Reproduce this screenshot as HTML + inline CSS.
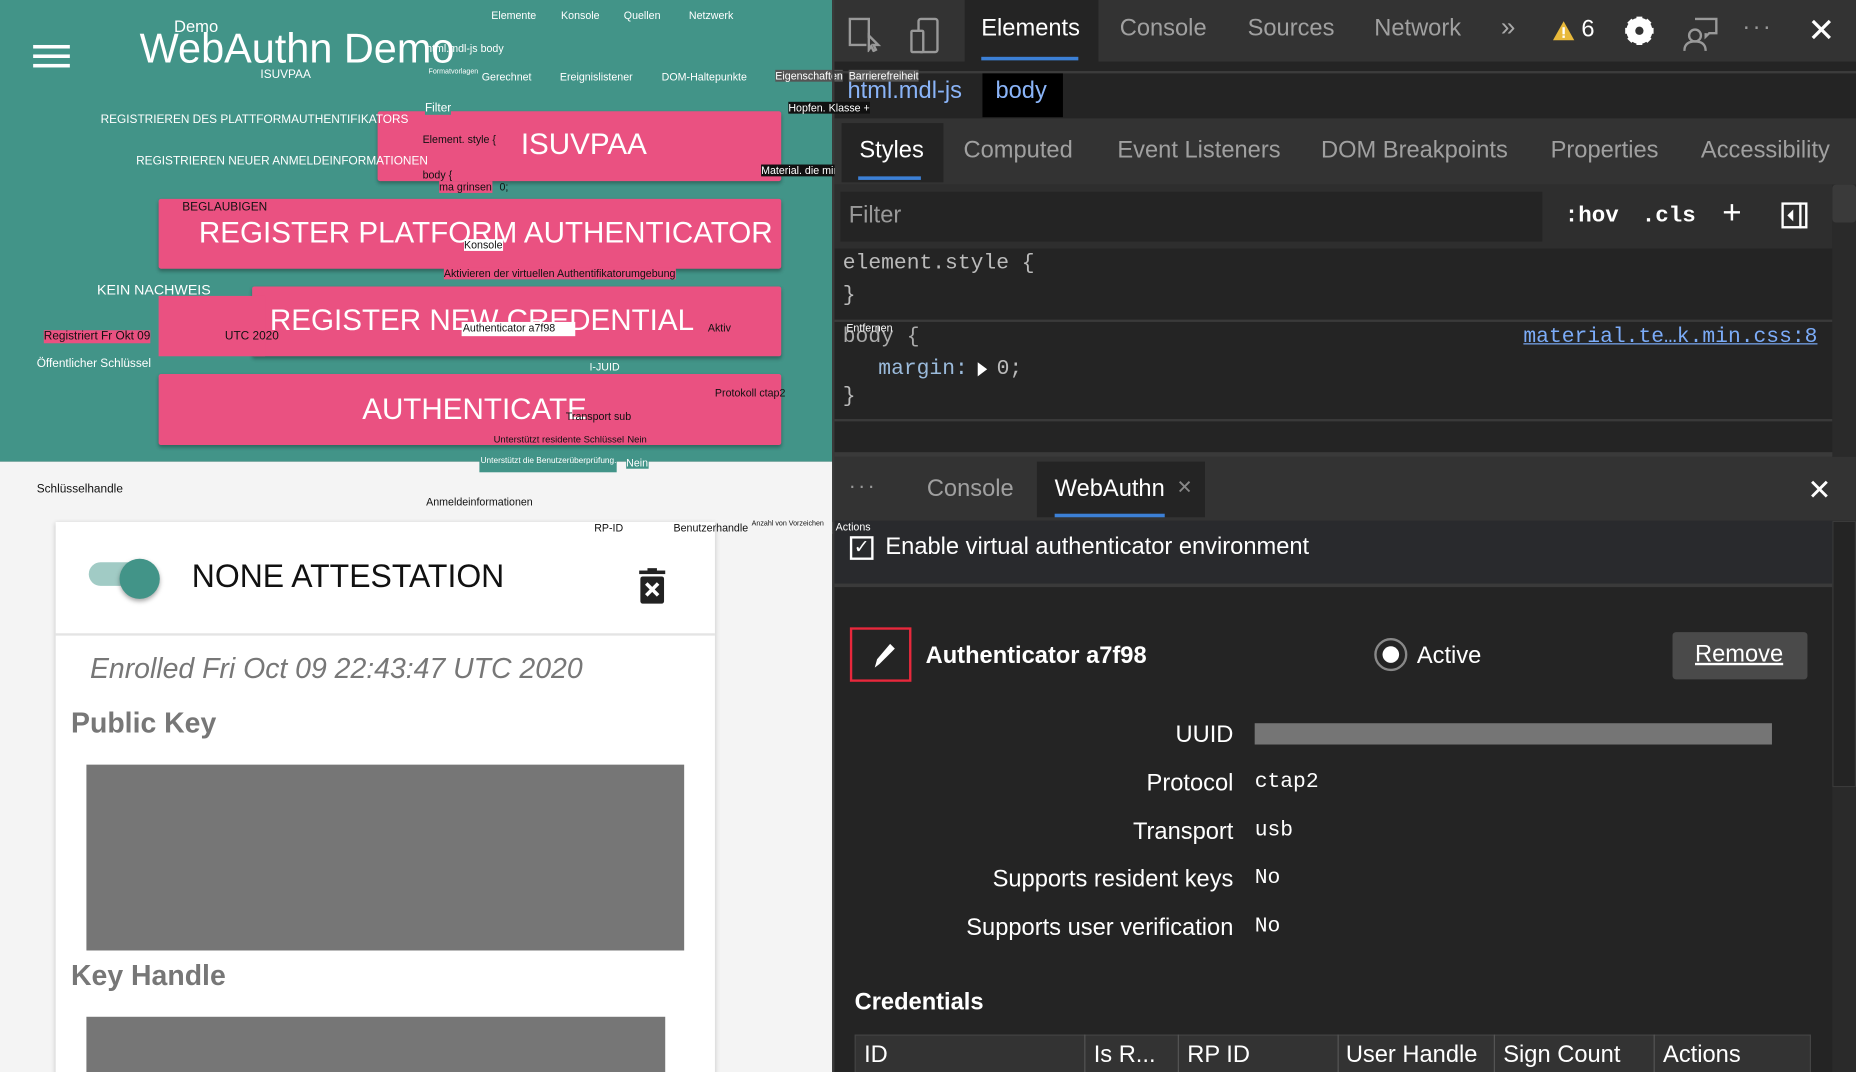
<!DOCTYPE html>
<html><head><meta charset="utf-8">
<style>
html,body{margin:0;padding:0;width:1856px;height:1072px;overflow:hidden;background:#242424}
#w{position:absolute;left:0;top:0;width:1568px;height:906px;transform:scale(1.18367);transform-origin:0 0;font-family:"Liberation Sans",Arial,sans-serif;overflow:hidden}
.a{position:absolute;white-space:nowrap}
.mono{font-family:"Liberation Mono","DejaVu Sans Mono",monospace}
.pk{background:#ea5181;box-shadow:0 2px 3px rgba(0,0,0,.3);border-radius:2px}
.s{font-size:9px;color:#111;line-height:11px}
.dt{color:#a0a0a0;font-size:20px}
</style></head><body><div id="w">
<!-- left -->
<div class="a" style="left:0;top:0;width:703px;height:390px;background:#429488"></div>
<div class="a" style="left:0;top:390px;width:703px;height:516px;background:#f4f4f4"></div>
<div class="a" style="left:28px;top:38px;width:31px;height:3px;background:#fff;box-shadow:0 8px 0 #fff,0 16px 0 #fff"></div>
<div class="a" style="left:147px;top:14px;font-size:14px;color:#fff">Demo</div>
<div class="a" style="left:118px;top:22px;font-size:35px;color:#fff">WebAuthn Demo</div>
<div class="a" style="left:220px;top:58px;font-size:10px;color:#fff">ISUVPAA</div>
<div class="a" style="left:415px;top:8px;font-size:9px;color:#fff">Elemente</div>
<div class="a" style="left:474px;top:8px;font-size:9px;color:#fff">Konsole</div>
<div class="a" style="left:527px;top:8px;font-size:9px;color:#fff">Quellen</div>
<div class="a" style="left:582px;top:8px;font-size:9px;color:#fff">Netzwerk</div>
<div class="a" style="left:360px;top:36px;font-size:9px;color:#fff">html.mdl-js body</div>
<div class="a" style="left:362px;top:58px;font-size:6px;color:#fff">Formatvorlagen</div>
<div class="a" style="left:407px;top:60px;font-size:9px;color:#fff">Gerechnet</div>
<div class="a" style="left:473px;top:60px;font-size:9px;color:#fff">Ereignislistener</div>
<div class="a" style="left:559px;top:60px;font-size:9px;color:#fff">DOM-Haltepunkte</div>
<div class="a" style="left:655px;top:59px;font-size:9px;color:#fff;background:#555">Eigenschaften</div>
<div class="a pk" style="left:319px;top:94px;width:341px;height:59px"></div>
<div class="a" style="left:85px;top:96px;font-size:10px;color:#fff">REGISTRIEREN DES PLATTFORMAUTHENTIFIKATORS</div>
<div class="a" style="left:115px;top:131px;font-size:10px;color:#fff">REGISTRIEREN NEUER ANMELDEINFORMATIONEN</div>
<div class="a" style="left:440px;top:108px;font-size:25px;color:#fff">ISUVPAA</div>
<div class="a" style="left:359px;top:86px;font-size:10px;color:#fff;background:#429488">Filter</div>
<div class="a" style="left:357px;top:108px" ><span class="s">Element. style {</span></div>
<div class="a" style="left:357px;top:138px"><span class="s">body {</span></div>
<div class="a" style="left:371px;top:153px;font-size:9px;background:#ea5181;color:#111">ma grinsen</div>
<div class="a" style="left:422px;top:153px;font-size:9px;color:#111">0;</div>
<div class="a pk" style="left:134px;top:168px;width:526px;height:59px"></div>
<div class="a" style="left:154px;top:170px;font-size:10px;color:#111">BEGLAUBIGEN</div>
<div class="a" style="left:168px;top:183px;font-size:25px;color:#fff">REGISTER PLATFORM AUTHENTICATOR</div>
<div class="a" style="left:392px;top:202px;font-size:9px;color:#111;background:#fff">Konsole</div>
<div class="a" style="left:375px;top:226px;font-size:9px;color:#111;background:#ea5181">Aktivieren der virtuellen Authentifikatorumgebung</div>
<div class="a" style="left:82px;top:238px;font-size:12px;color:#fff">KEIN NACHWEIS</div>
<div class="a pk" style="left:213px;top:242px;width:447px;height:59px"></div>
<div class="a" style="left:134px;top:250px;width:90px;height:51px;background:#ea5181"></div>
<div class="a" style="left:228px;top:257px;font-size:25px;color:#fff">REGISTER NEW CREDENTIAL</div>
<div class="a" style="left:390px;top:272px;width:96px;height:12px;background:#fff"></div>
<div class="a" style="left:391px;top:272px;font-size:9px;color:#111">Authenticator a7f98</div>
<div class="a" style="left:598px;top:272px;font-size:9px;color:#111">Aktiv</div>
<div class="a" style="left:37px;top:279px;font-size:10px;color:#111;background:#ea5181">Registriert Fr Okt 09</div>
<div class="a" style="left:190px;top:279px;font-size:10px;color:#111">UTC 2020</div>
<div class="a" style="left:31px;top:302px;font-size:10px;color:#fff">Öffentlicher Schlüssel</div>
<div class="a" style="left:498px;top:305px;font-size:9px;color:#fff">I-JUID</div>
<div class="a pk" style="left:134px;top:316px;width:526px;height:60px"></div>
<div class="a" style="left:306px;top:332px;font-size:25px;color:#fff">AUTHENTICATE</div>
<div class="a" style="left:604px;top:327px;font-size:9px;color:#111">Protokoll ctap2</div>
<div class="a" style="left:478px;top:347px;font-size:9px;color:#111">Transport sub</div>
<div class="a" style="left:417px;top:367px;font-size:8px;color:#111">Unterstützt residente Schlüssel</div>
<div class="a" style="left:530px;top:367px;font-size:8px;color:#111">Nein</div>
<div class="a" style="left:405px;top:384px;width:116px;height:15px;background:#429488"></div>
<div class="a" style="left:406px;top:386px;font-size:7px;color:#fff">Unterstützt die Benutzerüberprüfung.</div>
<div class="a" style="left:529px;top:386px;font-size:9px;color:#fff;background:#429488">Nein</div>
<div class="a" style="left:31px;top:408px;font-size:10px;color:#111">Schlüsselhandle</div>
<div class="a" style="left:360px;top:419px;font-size:9px;color:#111">Anmeldeinformationen</div>
<div class="a" style="left:47px;top:441px;width:557px;height:470px;background:#fff;box-shadow:0 1px 4px rgba(0,0,0,.2)"></div>
<div class="a" style="left:47px;top:535px;width:557px;height:2px;background:#e4e4e4"></div>
<div class="a" style="left:502px;top:441px;font-size:9px;color:#111">RP-ID</div>
<div class="a" style="left:569px;top:441px;font-size:9px;color:#111">Benutzerhandle</div>
<div class="a" style="left:635px;top:440px;font-size:6px;color:#111">Anzahl von Vorzeichen</div>
<div class="a" style="left:703px;top:441px;font-size:9px;color:#111;background:#fff">Actions</div>
<div class="a" style="left:75px;top:475px;width:52px;height:20px;border-radius:10px;background:#a1cbc5"></div>
<div class="a" style="left:101px;top:472px;width:34px;height:34px;border-radius:50%;background:#429488;box-shadow:0 2px 4px rgba(0,0,0,.35)"></div>
<div class="a" style="left:162px;top:472px;font-size:27px;color:#111">NONE ATTESTATION</div>
<svg class="a" style="left:538px;top:479px" width="26" height="32" viewBox="0 0 26 32"><rect x="2" y="3" width="22" height="3" fill="#222"/><rect x="9" y="1" width="8" height="3" fill="#222"/><rect x="3" y="8" width="20" height="23" rx="2" fill="#222"/><path d="M8 14l10 10M18 14L8 24" stroke="#fff" stroke-width="3"/></svg>
<div class="a" style="left:76px;top:552px;font-size:24px;font-style:italic;color:#777">Enrolled Fri Oct 09 22:43:47 UTC 2020</div>
<div class="a" style="left:60px;top:598px;font-size:24px;font-weight:bold;color:#777">Public Key</div>
<div class="a" style="left:73px;top:646px;width:505px;height:157px;background:#767676"></div>
<div class="a" style="left:60px;top:811px;font-size:24px;font-weight:bold;color:#777">Key Handle</div>
<div class="a" style="left:73px;top:859px;width:489px;height:50px;background:#767676"></div>
<!-- devtools -->
<div class="a" style="left:703px;top:0;width:2px;height:906px;background:#3a3a3a"></div>
<div class="a" style="left:705px;top:0;width:863px;height:52px;background:#333"></div>
<svg class="a" style="left:716px;top:14px" width="30" height="30" viewBox="0 0 30 30" fill="none" stroke="#999" stroke-width="2"><path d="M18 18V2H2v22h14"/><path d="M18 16l8 8-4 0 2 4-2 1-2-4-2 3z" fill="#333"/></svg>
<svg class="a" style="left:768px;top:14px" width="28" height="32" viewBox="0 0 28 32" fill="none" stroke="#999" stroke-width="2"><rect x="8" y="2" width="16" height="28" rx="2"/><rect x="2" y="12" width="10" height="18" rx="1" fill="#333"/></svg>
<div class="a" style="left:815px;top:0;width:113px;height:52px;background:#242424"></div>
<div class="a" style="left:829px;top:48px;width:82px;height:3px;background:#3c80d6"></div>
<div class="a" style="left:829px;top:13px;font-size:20px;color:#fff">Elements</div>
<div class="a dt" style="left:946px;top:13px">Console</div>
<div class="a dt" style="left:1054px;top:13px">Sources</div>
<div class="a dt" style="left:1161px;top:13px">Network</div>
<div class="a" style="left:1268px;top:10px;font-size:22px;color:#aaa">»</div>
<svg class="a" style="left:1311px;top:17px" width="20" height="18" viewBox="0 0 20 18"><path d="M10 1L19 17H1z" fill="#e8b93b"/><rect x="9" y="6" width="2" height="6" fill="#fff"/><rect x="9" y="13" width="2" height="2" fill="#fff"/></svg>
<div class="a" style="left:1336px;top:14px;font-size:20px;color:#fff">6</div>
<svg class="a" style="left:1372px;top:13px" width="26" height="26" viewBox="0 0 26 26"><circle cx="13" cy="13" r="8" fill="none" stroke="#fff" stroke-width="6"/><g stroke="#fff" stroke-width="5"><path d="M13 1v24M1 13h24M4.5 4.5l17 17M21.5 4.5l-17 17"/></g><circle cx="13" cy="13" r="3.5" fill="#333"/></svg>
<svg class="a" style="left:1422px;top:14px" width="30" height="30" viewBox="0 0 30 30" fill="none" stroke="#999" stroke-width="2"><path d="M10 2h18v12h-6l-3 3v-3"/><circle cx="10" cy="16" r="5"/><path d="M1 29c0-6 4-8 9-8s9 2 9 8"/></svg>
<div class="a" style="left:1472px;top:12px;font-size:20px;color:#999;letter-spacing:2px">···</div>
<div class="a" style="left:1527px;top:9px;font-size:28px;color:#fff">✕</div>
<div class="a" style="left:705px;top:60px;width:863px;height:2px;background:#3c3c3c"></div>
<div class="a" style="left:716px;top:66px;font-size:20px;color:#8ab4f8">html.mdl-js</div>
<div class="a" style="left:830px;top:62px;width:68px;height:37px;background:#000"></div>
<div class="a" style="left:841px;top:66px;font-size:20px;color:#8ab4f8">body</div>
<div class="a" style="left:717px;top:59px;font-size:9px;color:#fff;background:#555">Barrierefreiheit</div>
<div class="a" style="left:666px;top:86px;font-size:9px;color:#fff;background:#111">Hopfen. Klasse +</div>
<div class="a" style="left:643px;top:139px;font-size:9px;color:#fff;background:#111">Material. die min. css:8</div>
<div class="a" style="left:705px;top:100px;width:863px;height:56px;background:#333"></div>
<div class="a" style="left:711px;top:104px;width:86px;height:50px;background:#242424"></div>
<div class="a" style="left:725px;top:149px;width:53px;height:3px;background:#3c80d6"></div>
<div class="a" style="left:726px;top:116px;font-size:20px;color:#fff">Styles</div>
<div class="a dt" style="left:814px;top:116px">Computed</div>
<div class="a dt" style="left:944px;top:116px">Event Listeners</div>
<div class="a dt" style="left:1116px;top:116px">DOM Breakpoints</div>
<div class="a dt" style="left:1310px;top:116px">Properties</div>
<div class="a dt" style="left:1437px;top:116px">Accessibility</div>
<div class="a" style="left:705px;top:156px;width:843px;height:54px;background:#2e2e2e"></div>
<div class="a" style="left:710px;top:162px;width:593px;height:42px;background:#242424"></div>
<div class="a" style="left:717px;top:171px;font-size:20px;color:#999">Filter</div>
<div class="a mono" style="left:1322px;top:171px;font-size:19px;color:#fff;font-weight:bold">:hov</div>
<div class="a mono" style="left:1387px;top:171px;font-size:19px;color:#fff;font-weight:bold">.cls</div>
<div class="a" style="left:1455px;top:164px;font-size:28px;color:#fff">+</div>
<div class="a" style="left:1505px;top:171px;width:22px;height:22px;border:2px solid #fff;box-sizing:border-box"></div>
<div class="a" style="left:1520px;top:171px;width:2px;height:22px;background:#fff"></div>
<div class="a" style="left:1510px;top:177px;width:0;height:0;border-right:5px solid #fff;border-top:5px solid transparent;border-bottom:5px solid transparent"></div>
<div class="a mono" style="left:712px;top:213px;font-size:18px;color:#bbb">element.style {</div>
<div class="a mono" style="left:712px;top:240px;font-size:18px;color:#bbb">}</div>
<div class="a" style="left:705px;top:270px;width:843px;height:2px;background:#3a3a3a"></div>
<div class="a mono" style="left:712px;top:275px;font-size:18px;color:#aaa">body {</div>
<div class="a" style="left:715px;top:272px;font-size:9px;color:#fff">Entfernen</div>
<div class="a mono" style="left:1287px;top:275px;font-size:18px;color:#7cacf8;text-decoration:underline">material.te…k.min.css:8</div>
<div class="a mono" style="left:742px;top:302px;font-size:18px;color:#9bbbdc">margin:</div>
<div class="a" style="left:826px;top:306px;width:0;height:0;border-left:8px solid #fff;border-top:6px solid transparent;border-bottom:6px solid transparent"></div>
<div class="a mono" style="left:842px;top:302px;font-size:18px;color:#bbb">0;</div>
<div class="a mono" style="left:712px;top:325px;font-size:18px;color:#bbb">}</div>
<div class="a" style="left:705px;top:354px;width:843px;height:2px;background:#3a3a3a"></div>
<div class="a" style="left:705px;top:382px;width:863px;height:4px;background:#3a3a3a"></div>
<div class="a" style="left:1548px;top:156px;width:20px;height:230px;background:#2a2a2a"></div>
<div class="a" style="left:1548px;top:156px;width:20px;height:32px;background:#3a3a3a;border-radius:3px"></div>
<!-- drawer -->
<div class="a" style="left:705px;top:386px;width:863px;height:54px;background:#333"></div>
<div class="a" style="left:717px;top:400px;font-size:18px;color:#999;letter-spacing:2px">···</div>
<div class="a dt" style="left:783px;top:402px">Console</div>
<div class="a" style="left:876px;top:390px;width:142px;height:47px;background:#242424"></div>
<div class="a" style="left:891px;top:434px;width:93px;height:3px;background:#3c80d6"></div>
<div class="a" style="left:891px;top:402px;font-size:20px;color:#fff">WebAuthn</div>
<div class="a" style="left:994px;top:402px;font-size:16px;color:#888">✕</div>
<div class="a" style="left:1527px;top:400px;font-size:24px;color:#fff">✕</div>
<div class="a" style="left:705px;top:440px;width:843px;height:54px;background:#292a2d"></div>
<div class="a" style="left:705px;top:493px;width:843px;height:3px;background:#3a3a3a"></div>
<div class="a" style="left:1548px;top:440px;width:20px;height:466px;background:#2a2a2a"></div>
<div class="a" style="left:1548px;top:440px;width:20px;height:225px;background:#242424;border:1px solid #3a3a3a;box-sizing:border-box"></div>
<div class="a" style="left:706px;top:440px;font-size:9px;color:#fff">Actions</div>
<div class="a" style="left:718px;top:453px;width:20px;height:20px;border:2px solid #fff;box-sizing:border-box;color:#fff;font-size:16px;line-height:16px;text-align:center">✓</div>
<div class="a" style="left:748px;top:451px;font-size:20px;color:#fff">Enable virtual authenticator environment</div>
<div class="a" style="left:718px;top:530px;width:52px;height:46px;border:2px solid #e8283c;box-sizing:border-box"></div>
<svg class="a" style="left:734px;top:540px" width="26" height="26" viewBox="0 0 26 26"><path d="M5 24l2-7L18 4l4 4L9 21z" fill="#fff"/></svg>
<div class="a" style="left:782px;top:543px;font-size:20px;color:#fff;font-weight:bold">Authenticator a7f98</div>
<div class="a" style="left:1161px;top:539px;width:28px;height:28px;border:2px solid #888;border-radius:50%;box-sizing:border-box"></div>
<div class="a" style="left:1168px;top:546px;width:14px;height:14px;background:#fff;border-radius:50%"></div>
<div class="a" style="left:1197px;top:543px;font-size:20px;color:#fff">Active</div>
<div class="a" style="left:1413px;top:534px;width:114px;height:40px;background:#4a4a4a;border-radius:3px"></div>
<div class="a" style="left:1432px;top:542px;font-size:20px;color:#fff;text-decoration:underline">Remove</div>
<div class="a" style="left:760px;top:609px;width:282px;text-align:right;font-size:20px;color:#fff;line-height:25px">UUID</div>
<div class="a" style="left:1060px;top:611px;width:437px;height:18px;background:#757575"></div>
<div class="a" style="left:760px;top:650px;width:282px;text-align:right;font-size:20px;color:#fff;line-height:25px">Protocol</div>
<div class="a" style="left:760px;top:691px;width:282px;text-align:right;font-size:20px;color:#fff;line-height:25px">Transport</div>
<div class="a" style="left:760px;top:731px;width:282px;text-align:right;font-size:20px;color:#fff;line-height:25px">Supports resident keys</div>
<div class="a" style="left:760px;top:772px;width:282px;text-align:right;font-size:20px;color:#fff;line-height:25px">Supports user verification</div>
<div class="a mono" style="left:1060px;top:651px;font-size:18px;color:#fff">ctap2</div>
<div class="a mono" style="left:1060px;top:692px;font-size:18px;color:#fff">usb</div>
<div class="a mono" style="left:1060px;top:732px;font-size:18px;color:#fff">No</div>
<div class="a mono" style="left:1060px;top:773px;font-size:18px;color:#fff">No</div>
<div class="a" style="left:722px;top:836px;font-size:20px;color:#fff;font-weight:bold">Credentials</div>
<div class="a" style="left:722px;top:874px;width:808px;height:40px;background:#333;border:1px solid #444;box-sizing:border-box"></div>
<div class="a" style="left:916px;top:874px;width:1px;height:32px;background:#555;box-shadow:79px 0 0 #555,214px 0 0 #555,346px 0 0 #555,481px 0 0 #555"></div>
<div class="a" style="left:730px;top:880px;font-size:20px;color:#fff">ID</div>
<div class="a" style="left:924px;top:880px;font-size:20px;color:#fff">Is R...</div>
<div class="a" style="left:1003px;top:880px;font-size:20px;color:#fff">RP ID</div>
<div class="a" style="left:1137px;top:880px;font-size:20px;color:#fff">User Handle</div>
<div class="a" style="left:1270px;top:880px;font-size:20px;color:#fff">Sign Count</div>
<div class="a" style="left:1405px;top:880px;font-size:20px;color:#fff">Actions</div>
</div></body></html>
